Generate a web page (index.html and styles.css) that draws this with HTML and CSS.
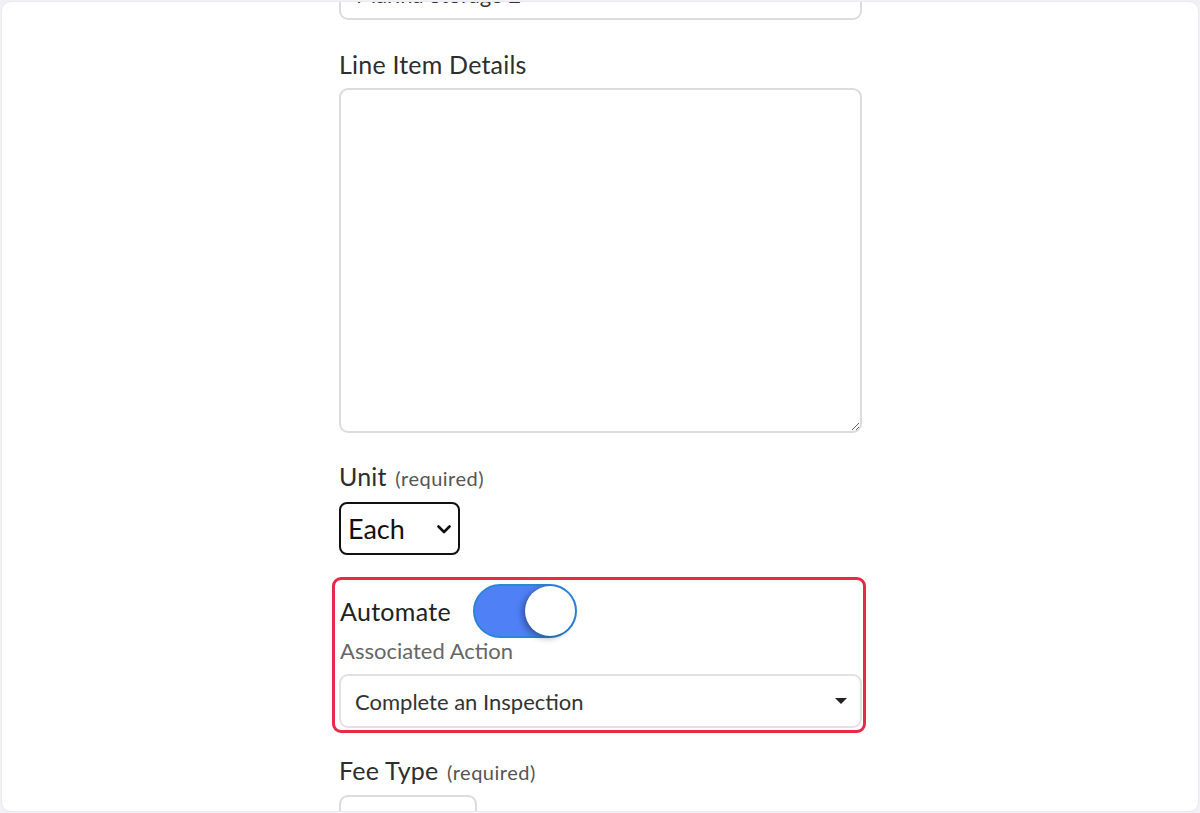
FILE: index.html
```html
<!DOCTYPE html>
<html lang="en">
<head>
<meta charset="utf-8">
<title>Line Item</title>
<link rel="stylesheet" href="styles.css">
</head>
<body>
<div class="frame">
  <form class="form">
    <div class="field field-top">
      <div class="input">Marina Storage 2</div>
    </div>

    <div class="field field-details">
      <label class="label">Line Item Details</label>
      <textarea class="textarea"></textarea>
    </div>

    <div class="field field-unit">
      <label class="label">Unit <span class="req">(required)</span></label>
      <div class="unit-select">
        <span class="unit-text">Each</span>
        <svg class="chevron" width="14" height="9" viewBox="0 0 14 9" aria-hidden="true">
          <path d="M1.5 1.5 L7 7 L12.5 1.5" fill="none" stroke="#111" stroke-width="2.6" stroke-linecap="round" stroke-linejoin="round"/>
        </svg>
      </div>
    </div>

    <div class="highlight">
      <div class="automate-row">
        <span class="automate-label">Automate</span>
        <span class="toggle"><span class="knob"></span></span>
      </div>
      <div class="sub-label">Associated Action</div>
      <div class="action-select">
        <span class="action-text">Complete an Inspection</span>
        <span class="caret"></span>
      </div>
    </div>

    <div class="field field-fee">
      <label class="label">Fee Type <span class="req">(required)</span></label>
      <div class="fee-input"></div>
    </div>
  </form>
</div>
</body>
</html>
```

FILE: styles.css
```css
* { box-sizing: border-box; }

html, body {
  margin: 0;
  height: 100%;
  overflow: hidden;
}

body {
  background: #f0f0f5;
  font-family: Lato, "Open Sans", "Liberation Sans", sans-serif;
  color: #333;
  padding: 1px;
}

.frame {
  height: 811px;
  background: #fff;
  border: 1px solid #e9e9ef;
  border-radius: 10px;
  overflow: hidden;
}

.form {
  width: 523px;
  margin-left: 337px;
  margin-top: -39px;
  display: flex;
  flex-direction: column;
}

.field {
  display: flex;
  flex-direction: column;
}

.input {
  height: 57px;
  border: 2px solid #dcdcdc;
  border-radius: 9px;
  font-size: 22px;
  line-height: 26px;
  padding: 17px 15px 10px;
  color: #333;
}

.label {
  font-size: 25px;
  line-height: 30px;
  height: 30px;
  letter-spacing: 0.2px;
  color: #2e2e2e;
}

.req {
  font-size: 20px;
  line-height: 20px;
  letter-spacing: 0.5px;
  margin-left: 2px;
  color: #555;
}

.field-details {
  margin-top: 29px;
}

.field-details .label {
  margin-bottom: 9px;
}

.textarea {
  height: 345px;
  border: 2px solid #dcdcdc;
  border-radius: 9px;
  resize: vertical;
  font-family: inherit;
  font-size: 20px;
  outline: none;
}

.field-unit {
  margin-top: 28px;
}

.field-unit .label {
  margin-bottom: 11px;
}

.unit-select {
  width: 121px;
  height: 53px;
  border: 2px solid #111;
  border-radius: 8px;
  background: #fff;
  display: flex;
  align-items: center;
  justify-content: space-between;
  padding: 0 7px 0 7px;
}

.unit-text {
  font-size: 27px;
  color: #111;
}

.chevron {
  display: block;
  margin-top: 1px;
}

.highlight {
  margin: 22px -4px 0 -7px;
  border: 3px solid #e8294a;
  border-radius: 9px;
  padding: 4px 1px 2px 4px;
  display: flex;
  flex-direction: column;
}

.automate-row {
  display: flex;
  align-items: center;
  gap: 22px;
  padding-left: 1px;
}

.automate-label {
  font-size: 25px;
  letter-spacing: 0.3px;
  color: #222;
}

.toggle {
  position: relative;
  width: 104px;
  height: 54px;
  border-radius: 27px;
  background: #4f80f6;
  border: 2px solid #2b86d6;
}

.knob {
  position: absolute;
  right: 0;
  top: 0;
  width: 50px;
  height: 50px;
  border-radius: 50%;
  background: #fff;
  box-shadow: -3px 2px 6px rgba(0, 0, 0, 0.35);
}

.sub-label {
  font-size: 22px;
  line-height: 26px;
  color: #666;
  padding-left: 1px;
  margin-bottom: 10px;
}

.action-select {
  height: 54px;
  border: 2px solid #e2e2e2;
  border-radius: 9px;
  display: flex;
  align-items: center;
  justify-content: space-between;
  padding: 0 13px 0 14px;
}

.action-text {
  font-size: 22px;
  color: #333;
}

.caret {
  width: 0;
  height: 0;
  border-left: 6px solid transparent;
  border-right: 6px solid transparent;
  border-top: 6px solid #222;
}

.field-fee {
  margin-top: 22px;
}

.field-fee .label {
  margin-bottom: 10px;
}

.fee-input {
  width: 138px;
  height: 50px;
  border: 2px solid #dcdcdc;
  border-radius: 9px;
}
```
